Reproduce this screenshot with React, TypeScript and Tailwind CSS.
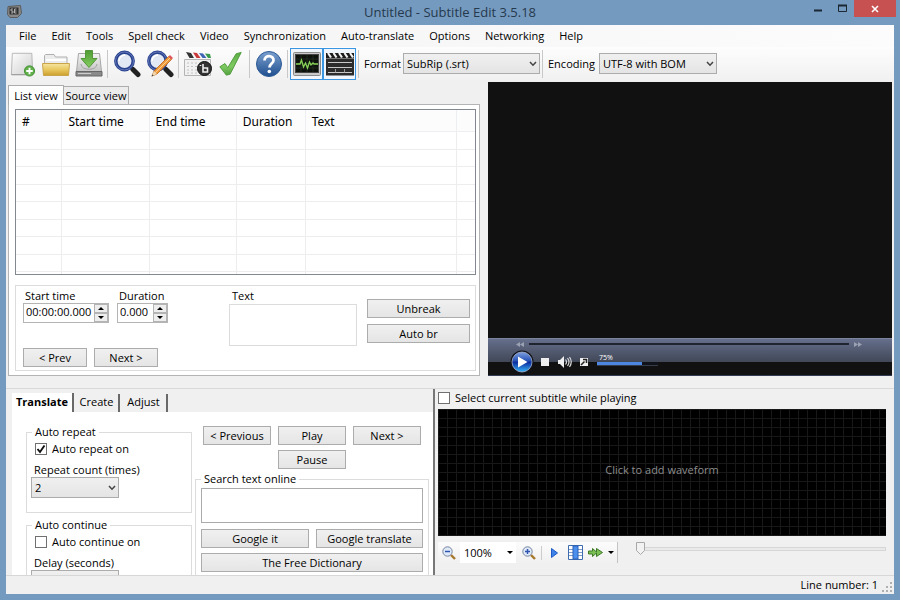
import { useState } from "react";

const menuItems = [
  "File",
  "Edit",
  "Tools",
  "Spell check",
  "Video",
  "Synchronization",
  "Auto-translate",
  "Options",
  "Networking",
  "Help",
];

const NewIcon = () => (
  <svg viewBox="0 0 28 28" className="size-[26px]">
    <defs>
      <linearGradient id="paper" x1="0" y1="0" x2="1" y2="1">
        <stop offset="0" stopColor="#fdfdfd" />
        <stop offset="1" stopColor="#cfcfcf" />
      </linearGradient>
    </defs>
    <path d="M2.500 2.500h21l1 23H1.500z" fill="url(#paper)" stroke="#b4b4b4" />
    <path d="M1.500 25.500h22" stroke="#979797" />
    <circle cx="21" cy="21.500" r="5.500" fill="#62b04a" stroke="#3f8f34" />
    <path d="M21 18v7M17.500 21.500h7" stroke="#fff" strokeWidth="2" />
  </svg>
);

const OpenIcon = () => (
  <svg viewBox="0 0 28 28" className="size-7">
    <defs>
      <linearGradient id="folder" x1="0" y1="0" x2="0" y2="1">
        <stop offset="0" stopColor="#f6e4a0" />
        <stop offset="0.500" stopColor="#e8c860" />
        <stop offset="1" stopColor="#cb9f2c" />
      </linearGradient>
    </defs>
    <path d="M2.500 14V5.500l1-1H12l1.500 2.500H25V14z" fill="#ececec" stroke="#b0b0b0" />
    <path d="M4 10h20" stroke="#fff" strokeWidth="2" />
    <path d="M.500 13.500h27l-1 12h-25z" fill="url(#folder)" stroke="#c9a44a" />
  </svg>
);

const SaveIcon = () => (
  <svg viewBox="0 0 28 28" className="size-7">
    <defs>
      <linearGradient id="disk" x1="0" y1="0" x2="0" y2="1">
        <stop offset="0" stopColor="#f4f4f4" />
        <stop offset="1" stopColor="#c4c4c4" />
      </linearGradient>
      <linearGradient id="arrow" x1="0" y1="0" x2="0" y2="1">
        <stop offset="0" stopColor="#4f9a35" />
        <stop offset="1" stopColor="#84cf5d" />
      </linearGradient>
    </defs>
    <path d="M3.500 3.500h21l2 18H1.500z" fill="url(#disk)" stroke="#a6a6a6" />
    <path d="M1 21.500h26V26H1z" fill="#8a8a8a" stroke="#666" />
    <path d="M3 23.500h13" stroke="#ccc" />
    <path d="M6 14c0 7 16 7 16 0" fill="none" stroke="#a2a2a2" />
    <path d="M10.500.500h7v8H22l-8 9-8-9h4.500z" fill="url(#arrow)" stroke="#54963c" />
  </svg>
);

const Lens = () => (
  <>
    <path d="M17 17l3 3" stroke="#777" strokeWidth="3" />
    <path d="M20 19.500l5 5" stroke="#222" strokeWidth="5" strokeLinecap="round" />
    <circle cx="11.500" cy="11" r="8.700" fill="#e2e9f4" stroke="#29428f" strokeWidth="3.400" />
    <circle cx="11.500" cy="11" r="9" fill="none" stroke="#6579b8" strokeWidth="1" />
    <path d="M6 11a6 6 0 0 1 6-6" fill="none" stroke="#fff" strokeWidth="1.500" />
  </>
);

const FindIcon = () => (
  <svg viewBox="0 0 28 28" className="size-7">
    <Lens />
  </svg>
);

const ReplaceIcon = () => (
  <svg viewBox="0 0 28 28" className="size-7">
    <Lens />
    <path d="M8 21L22.500 6.500l3 3L11 24l-5 2z" fill="#f09a3e" stroke="#b96519" strokeWidth=".8" />
    <path d="M9.500 22.500L24 8" stroke="#ffd08e" />
    <path d="M22.500 6.500L24 5l3 3-1.500 1.500z" fill="#e0575c" />
    <path d="M8 21l-2.500 5.500L11 24z" fill="#f0d6ae" />
    <path d="M6.500 24.500l-1 2 2-1z" fill="#333" />
  </svg>
);

const VisualSyncIcon = () => (
  <svg viewBox="0 0 28 28" className="size-7">
    <path d="M.500 9.500h26v16H.500z" fill="#f1f1f1" stroke="#b4b4b4" />
    <path d="M.500 2l26 1.500v5H.500z" fill="#f7f7f7" />
    <path d="M2 2l5 1 3 5H5.500z" fill="#333" />
    <path d="M9 2.500l4 .5L16.500 8h-4z" fill="#c93a3a" />
    <path d="M15 3l4 .5L22.500 8h-4z" fill="#3b64b5" />
    <path d="M21 3.500l5 .5 1 4h-3z" fill="#3b9a4c" />
    <path d="M3 13h21M3 16.500h21M3 20h21M3 23h21" stroke="#c2c2c2" strokeDasharray="2 2" />
    <circle cx="20.500" cy="18.500" r="7" fill="#333" stroke="#111" />
    <path d="M19 14v4h4.500v4H19v-4M16.500 16v-1" fill="none" stroke="#eee" strokeWidth="1.600" />
  </svg>
);

const CheckIcon = () => (
  <svg viewBox="0 0 28 28" className="size-[26px]">
    <defs>
      <linearGradient id="check" x1="0" y1="0" x2="0" y2="1">
        <stop offset="0" stopColor="#5cab45" />
        <stop offset="0.600" stopColor="#7fcb62" />
        <stop offset="1" stopColor="#55a040" />
      </linearGradient>
    </defs>
    <path d="M2 17l5.500-3.500 3 4.500L19.500 3l5.500-1.500L13 25l-4 1z" fill="url(#check)" stroke="#4f9b3d" />
  </svg>
);

const HelpIcon = () => (
  <svg viewBox="0 0 28 28" className="size-7">
    <defs>
      <linearGradient id="help" x1="0" y1="0" x2="0" y2="1">
        <stop offset="0" stopColor="#7ba0cf" />
        <stop offset="1" stopColor="#1f4f8f" />
      </linearGradient>
    </defs>
    <circle cx="14" cy="14" r="12.500" fill="url(#help)" stroke="#2d5b96" />
    <path
      d="M9.500 10.500c.2-6 9.500-5.500 9 0-.2 3-4 3.300-4 7"
      fill="none"
      stroke="#fff"
      strokeWidth="2.800"
    />
    <circle cx="14.300" cy="21.500" r="1.800" fill="#fff" />
  </svg>
);

const WaveIcon = () => (
  <svg viewBox="0 0 28 28" className="size-7">
    <rect x=".5" y="2.500" width="27" height="23" rx="1" fill="#c9c9c9" stroke="#8a8a8a" />
    <rect x="2.500" y="4.500" width="23" height="18" fill="#0d120d" stroke="#444" />
    <path d="M3 9h22M3 13.500h22M3 18h22M8 5v17M14 5v17M20 5v17" stroke="#263526" strokeWidth=".7" />
    <path
      d="M3 14h4l1.500-4 2 7 2-4 2 5 2-6 1.500 3 2-2 1 1H25"
      fill="none"
      stroke="#87d257"
      strokeWidth="1.300"
    />
  </svg>
);

const ClapperIcon = () => (
  <svg viewBox="0 0 28 28" className="size-7">
    <path d="M0 3h28v5H0z" fill="#1b1b1b" />
    <path
      d="M2 3l3 4.500M7.500 3l3 4.500M13 3l3 4.500M18.500 3l3 4.500M24 3l3 4.500"
      stroke="#f3f3f3"
      strokeWidth="2.200"
    />
    <path d="M0 9h28v16.500H0z" fill="#2c2c2c" />
    <path d="M0 8.500h28" stroke="#777" />
    <path d="M2 12.500h24M2 17.500h24M2 22.500h24" stroke="#c8c8c8" strokeWidth="1.200" />
    <path d="M9.500 19v3.500M18.500 19v3.500" stroke="#999" />
  </svg>
);

const ToolButton = ({ label, active, children }: any) => (
  <button
    aria-label={label}
    className={
      "flex h-8 w-[33px] items-center justify-center border " +
      (active ? "border-[#3a96e0] bg-[#f0f6fc]" : "border-transparent")
    }
  >
    {children}
  </button>
);

const Separator = () => <div className="mx-[2px] h-7 w-px bg-[#c8c8c8]" />;

const Select = ({ id, label, value, className }: any) => (
  <div className={"relative " + className}>
    <select
      id={id}
      aria-label={label}
      className="block h-[21px] w-full appearance-none border border-[#acacac] bg-linear-to-b from-[#f0f0f0] to-[#e4e4e4] pl-[3px] pr-5"
    >
      <option>{value}</option>
    </select>
    <svg viewBox="0 0 8 6" className="pointer-events-none absolute right-[3px] top-2 h-[6px] w-2">
      <path d="M1 1l3 3.200L7 1" fill="none" stroke="#444" strokeWidth="1.500" />
    </svg>
  </div>
);

const Button = ({ className = "", children }: any) => (
  <button
    className={
      "h-[19px] border border-[#acacac] bg-linear-to-b from-[#f0f0f0] to-[#e5e5e5] text-center leading-4 " +
      className
    }
  >
    {children}
  </button>
);

const Spinner = ({ id, label, value, className }: any) => (
  <div>
    <label htmlFor={id} className="block pl-[2px] leading-[14px]">
      {label}
    </label>
    <div className={"flex h-5 border border-[#b4b4b4] bg-white " + className}>
      <input id={id} defaultValue={value} className="h-4 w-full min-w-0 pl-[2px]" />
      <div className="flex w-[14px] shrink-0 flex-col">
        <button aria-label={label + " up"} className="flex h-[9px] items-center justify-center border border-[#b4b4b4] bg-[#eee]">
          <svg viewBox="0 0 6 3" className="h-[3px] w-[6px]">
            <path d="M0 3l3-3 3 3z" />
          </svg>
        </button>
        <button aria-label={label + " down"} className="flex h-[9px] items-center justify-center border border-[#b4b4b4] bg-[#eee]">
          <svg viewBox="0 0 6 3" className="h-[3px] w-[6px]">
            <path d="M0 0l3 3 3-3z" />
          </svg>
        </button>
      </div>
    </div>
  </div>
);

const Checkbox = ({ label, checked }: any) => (
  <label className="flex h-[14px] shrink-0 items-center gap-[5px]">
    <span className="relative size-3">
      <input
        type="checkbox"
        defaultChecked={checked}
        className="peer block size-3 appearance-none border border-[#707070] bg-white"
      />
      <svg
        viewBox="0 0 12 12"
        className="pointer-events-none absolute inset-0 hidden size-3 peer-checked:block"
      >
        <path d="M2.500 6l2.500 3 4.500-6.500" fill="none" stroke="#111" strokeWidth="1.900" />
      </svg>
    </span>
    {label}
  </label>
);

const TitleBar = () => (
  <header className="flex h-[25px] shrink-0 items-start">
    <div className="w-[120px] pl-[7px] pt-[5px]">
      <svg viewBox="0 0 15 13" className="h-[13px] w-[15px]">
        <path d="M1 1.500l12.500-1 1 8-4 4H3l-2.500-3z" fill="#888" stroke="#5b5b5b" />
        <rect x="2.500" y="2.500" width="9" height="7" fill="#2e2e2e" />
        <path d="M6 4H4v2h2v2H4M9.500 4h-2v4h2M7.500 6h2" fill="none" stroke="#ccc" strokeWidth=".8" />
      </svg>
    </div>
    <h1 className="flex-1 text-center text-[13px] leading-6 text-[#25394d]">
      Untitled - Subtitle Edit 3.5.18
    </h1>
    <div className="flex w-[120px] justify-end pr-1">
      <button aria-label="Minimize" className="flex h-[17px] w-6 items-center justify-center">
        <svg viewBox="0 0 9 9" className="size-[9px]">
          <path d="M0 6.500h8" stroke="#1b2733" strokeWidth="2" />
        </svg>
      </button>
      <button aria-label="Maximize" className="flex h-[17px] w-6 items-center justify-center">
        <svg viewBox="0 0 9 9" className="size-[9px]">
          <path d="M.5 1.500h8v6h-8z" fill="none" stroke="#1b2733" />
          <path d="M0 1.500h9" stroke="#1b2733" strokeWidth="2" />
        </svg>
      </button>
      <button aria-label="Close" className="flex h-[17px] w-[42px] items-center justify-center bg-[#c75050]">
        <svg viewBox="0 0 8 8" className="size-2">
          <path d="M1 1l6 6M7 1L1 7" stroke="#fff" strokeWidth="1.600" />
        </svg>
      </button>
    </div>
  </header>
);

const Toolbar = () => (
  <div className="flex h-[35px] shrink-0 items-center bg-linear-to-b from-[#fdfdfd] to-[#f0f0f0] pb-[2px]">
    <ToolButton label="New"><NewIcon /></ToolButton>
    <ToolButton label="Open"><OpenIcon /></ToolButton>
    <ToolButton label="Save"><SaveIcon /></ToolButton>
    <Separator />
    <ToolButton label="Find"><FindIcon /></ToolButton>
    <ToolButton label="Replace"><ReplaceIcon /></ToolButton>
    <Separator />
    <ToolButton label="Visual sync"><VisualSyncIcon /></ToolButton>
    <ToolButton label="Spell check"><CheckIcon /></ToolButton>
    <Separator />
    <ToolButton label="Help"><HelpIcon /></ToolButton>
    <Separator />
    <ToolButton label="Waveform" active><WaveIcon /></ToolButton>
    <ToolButton label="Video" active><ClapperIcon /></ToolButton>
    <Separator />
    <label htmlFor="format" className="w-[42px] pl-[3px]">Format</label>
    <Select id="format" value="SubRip (.srt)" className="w-[137px]" />
    <Separator />
    <label htmlFor="encoding" className="w-[54px] pl-[3px]">Encoding</label>
    <Select id="encoding" value="UTF-8 with BOM" className="w-[118px]" />
  </div>
);

const ListView = () => (
  <div className="flex min-h-0 flex-col">
    <div role="tablist" className="flex h-[22px] items-end pt-[2px]">
      <button role="tab" aria-selected="true" className="relative -mb-px h-5 w-14 border border-b-0 border-[#acacac] bg-white leading-4">
        List view
      </button>
      <button role="tab" className="h-[18px] w-[65px] border border-b-0 border-l-0 border-[#acacac] bg-[#ececec] leading-4">
        Source view
      </button>
    </div>
    <div className="flex min-h-0 flex-1 flex-col gap-[10px] border border-[#b4b4b4] bg-white pb-1 pl-[6px] pr-[3px] pt-1">
      <div className="min-h-0 flex-1 overflow-hidden border border-[#828790]">
        <table className="w-full table-fixed border-collapse text-left font-['Noto_Sans',sans-serif] text-[12px] leading-4">
          <colgroup>
            <col className="w-[10%]" />
            <col className="w-[19%]" />
            <col className="w-[19%]" />
            <col className="w-[15%]" />
            <col />
            <col className="w-[4%]" />
          </colgroup>
          <thead>
            <tr className="h-[21px] bg-[#fcfcfd]">
              {["#", "Start time", "End time", "Duration", "Text", ""].map((name, i) => (
                <th key={i} className="border-b border-r border-[#eceef2] pl-[6px] pt-[3px] font-normal last:border-r-0">
                  {name}
                </th>
              ))}
            </tr>
          </thead>
          <tbody>
            {Array.from({ length: 9 }, (_, row) => (
              <tr key={row} className="odd:h-[18px] even:h-[17px]">
                {Array.from({ length: 6 }, (_, col) => (
                  <td key={col} className="border-b border-r border-[#ededed] last:border-r-0"></td>
                ))}
              </tr>
            ))}
          </tbody>
        </table>
      </div>
      <div className="flex h-[86px] shrink-0 border border-[#dcdcdc] pl-[7px] pr-[5px] pt-[3px]">
        <div className="flex flex-1 flex-col">
          <div className="flex gap-2">
            <Spinner id="start" label="Start time" value="00:00:00.000" className="w-[86px]" />
            <Spinner id="duration" label="Duration" value="0.000" className="w-[51px]" />
          </div>
          <div className="mt-[25px] flex gap-[7px]">
            <Button className="w-16">&lt; Prev</Button>
            <Button className="w-16">Next &gt;</Button>
          </div>
        </div>
        <div className="mr-[10px]">
          <label htmlFor="text" className="block pl-[3px] leading-[14px]">Text</label>
          <textarea id="text" className="mt-[1px] block h-[42px] w-32 resize-none border border-[#dcdcdc]" />
        </div>
        <div className="flex w-[103px] flex-col gap-[6px] pt-[10px]">
          <Button>Unbreak</Button>
          <Button>Auto br</Button>
        </div>
      </div>
    </div>
  </div>
);

const VideoPlayer = () => (
  <div className="flex flex-col bg-[#111]">
    <div className="flex-1"></div>
    <div className="h-[38px] border-b border-t border-b-[#333c52] border-t-[#7d859c] bg-linear-to-b from-[#666f8c] from-0% via-[#414858] via-63% to-[#111] to-63%">
      <div className="flex h-[10px] items-center gap-[5px] pl-7 pr-[30px]">
        <svg viewBox="0 0 8 5" className="h-[5px] w-2">
          <path d="M4 0v5L0 2.500zM8 0v5L4 2.500z" fill="#9aa1b3" />
        </svg>
        <input
          type="range"
          aria-label="Position"
          defaultValue={0}
          className="h-[2px] min-w-0 flex-1 appearance-none bg-[#20242f] [&::-webkit-slider-thumb]:appearance-none"
        />
        <svg viewBox="0 0 8 5" className="h-[5px] w-2">
          <path d="M0 0v5l4-2.500zM4 0v5l4-2.500z" fill="#9aa1b3" />
        </svg>
      </div>
      <div className="flex h-[26px] items-center pl-[22px]">
        <button aria-label="Play">
          <svg viewBox="0 0 24 24" className="size-6">
            <defs>
              <linearGradient id="play" x1="0" y1="0" x2="0" y2="1">
                <stop offset="0" stopColor="#7fa0e0" />
                <stop offset="0.450" stopColor="#2450b4" />
                <stop offset="0.500" stopColor="#0a2a9c" />
                <stop offset="1" stopColor="#37b4fa" />
              </linearGradient>
            </defs>
            <circle cx="12" cy="12" r="11.500" fill="#10131c" />
            <circle cx="12" cy="12" r="10" fill="url(#play)" stroke="#a4b0cc" strokeWidth=".8" />
            <path d="M8 6.500v11l9.500-5.500z" fill="#fff" />
          </svg>
        </button>
        <button aria-label="Stop" className="ml-[7px] size-2 bg-[#eee]"></button>
        <button aria-label="Mute" className="ml-[9px]">
          <svg viewBox="0 0 14 12" className="h-3 w-[14px]">
            <path d="M0 4h2l4-4v12L2 8H0z" fill="#eee" />
            <path d="M7.500 3.500q2 2.500 0 5M9.500 2q3 4 0 8M11.500 1q3.500 5 0 10" fill="none" stroke="#ddd" strokeWidth="1.200" />
          </svg>
        </button>
        <button aria-label="Full screen" className="ml-2">
          <svg viewBox="0 0 8 8" className="size-2">
            <path d="M0 0h8v8H0z" fill="#eee" />
            <path d="M1 7l3.500-3.500M3 1.500h3.500V5" fill="none" stroke="#222" strokeWidth="1.500" />
          </svg>
        </button>
        <label className="ml-[9px] block pb-1">
          <span className="block pl-[2px] text-[7px] leading-[8px] text-white">75%</span>
          <input
            type="range"
            defaultValue={75}
            className="block h-1 w-[61px] appearance-none border-b border-[#353c4c] bg-linear-to-r from-[#4c86e0] from-73% to-[#10131a] to-73% [&::-webkit-slider-thumb]:appearance-none"
          />
        </label>
      </div>
    </div>
  </div>
);

const TranslatePanel = () => (
  <div className="flex min-h-0 flex-col border-r-2 border-[#777] pl-[6px] pt-1">
    <div role="tablist" className="flex h-[19px] shrink-0 gap-px">
      <button role="tab" aria-selected="true" className="w-[62px] border-r-2 border-[#696969] bg-white pb-px font-bold">
        Translate
      </button>
      <button role="tab" className="mt-px w-[45px] border-r-2 border-[#696969] pb-[2px]">
        Create
      </button>
      <button role="tab" className="mt-px w-[47px] border-r-2 border-[#696969] pb-[2px]">
        Adjust
      </button>
    </div>
    <div className="flex flex-1 bg-white pl-[14px] pr-1">
      <div className="w-[166px] shrink-0 pt-[13px]">
        <fieldset className="border border-[#dcdcdc] pb-[14px] pl-1">
          <legend className="ml-[1px] px-[3px] leading-[14px]">Auto repeat</legend>
          <div className="mt-[3px] pl-1">
            <Checkbox label="Auto repeat on" checked />
          </div>
          <label htmlFor="repeat" className="mt-[7px] block pl-[3px] leading-[14px]">
            Repeat count (times)
          </label>
          <Select id="repeat" value="2" className="w-[88px]" />
        </fieldset>
        <fieldset className="mt-[5px] border border-[#dcdcdc] pb-[14px] pl-1">
          <legend className="ml-[1px] px-[3px] leading-[14px]">Auto continue</legend>
          <div className="mt-[3px] pl-1">
            <Checkbox label="Auto continue on" />
          </div>
          <label htmlFor="delay" className="mt-[7px] block pl-[3px] leading-[14px]">
            Delay (seconds)
          </label>
          <Select id="delay" value="2" className="w-[88px]" />
        </fieldset>
      </div>
      <div className="ml-[3px] flex-1 pt-[14px]">
        <div className="ml-2 grid grid-cols-[68px_68px_68px] gap-x-[7px] gap-y-[5px]">
          <Button>&lt; Previous</Button>
          <Button>Play</Button>
          <Button>Next &gt;</Button>
          <Button className="col-start-2">Pause</Button>
        </div>
        <fieldset className="mt-[3px] min-w-0 border border-[#dcdcdc] px-[5px] pb-2">
          <legend className="px-[3px] leading-[14px]">Search text online</legend>
          <textarea
            aria-label="Search text online"
            className="mt-[2px] block h-[35px] w-full resize-none border border-[#ababab]"
          />
          <div className="mt-[6px] flex flex-wrap gap-x-[7px] gap-y-[5px]">
            <Button className="w-[108px]">Google it</Button>
            <Button className="flex-1">Google translate</Button>
            <Button className="w-full">The Free Dictionary</Button>
          </div>
        </fieldset>
      </div>
    </div>
  </div>
);

const ZoomLens = ({ plus }: any) => (
  <svg viewBox="0 0 14 14" className="size-[14px]">
    <path d="M9 9l4 4" stroke="#a5782b" strokeWidth="2.400" />
    <circle cx="5.500" cy="5.500" r="4.700" fill="#dfe9f8" stroke="#76859e" />
    <path d="M3 5.500h5" stroke="#2c55b0" strokeWidth="1.500" />
    {plus && <path d="M5.500 3v5" stroke="#2c55b0" strokeWidth="1.500" />}
  </svg>
);

const DownArrow = () => (
  <svg viewBox="0 0 6 3" className="block h-[3px] w-[6px]">
    <path d="M0 0h6L3 3z" />
  </svg>
);

const Waveform = () => {
  const [speed, setSpeed] = useState(0);

  return (
    <div className="flex min-h-0 flex-col pl-[3px] pr-2 pt-[2px]">
      <Checkbox label="Select current subtitle while playing" />
      <button className="mt-1 flex min-h-0 flex-1 items-center justify-center bg-black bg-[linear-gradient(to_right,#181818_1px,transparent_1px),linear-gradient(to_bottom,#181818_1px,transparent_1px)] bg-[size:9px_9px] pb-[6px] text-[#8c8c8c]">
        Click to add waveform
      </button>
      <div className="mb-3 mt-[6px] flex h-[21px] shrink-0 items-center">
        <div className="flex h-[21px] w-[180px] items-center border-r border-[#c4c4c4] bg-linear-to-b from-[#fcfcfc] to-[#f0f0f0] pl-1">
          <button aria-label="Zoom out"><ZoomLens /></button>
          <div className="relative ml-1 flex items-center">
            <select aria-label="Zoom" className="h-[21px] w-14 appearance-none bg-white pl-1">
              <option>100%</option>
            </select>
            <span className="pointer-events-none absolute right-[3px] top-[9px]">
              <DownArrow />
            </span>
          </div>
          <button aria-label="Zoom in" className="ml-[6px]"><ZoomLens plus /></button>
          <div className="ml-[5px] h-[14px] w-px bg-[#ccc]" />
          <button aria-label="Play" className="ml-[9px]">
            <svg viewBox="0 0 7 10" className="h-[10px] w-[7px]">
              <path d="M.500.500v9l6-4.500z" fill="#3f83e8" stroke="#1f5bc4" />
            </svg>
          </button>
          <button aria-label="Center" className="ml-[10px]">
            <svg viewBox="0 0 15 15" className="size-[15px]">
              <path d="M.500.500h14v14H.500z" fill="#fff" stroke="#3d6cb0" />
              <path d="M1 4.500h13M1 7.500h13M1 10.500h13" stroke="#7c9ccb" />
              <path d="M5 1h5v13H5z" fill="#4b90ee" stroke="#2a5fb2" />
            </svg>
          </button>
          <button aria-label="Play rate" className="ml-[5px] flex items-center gap-[5px]">
            <svg viewBox="0 0 15 11" className="h-[11px] w-[15px]">
              <path
                d="M.5 4h4V1.500L8.500 5V1.500l6 4-6 4V6l-4 3.500V7h-4z"
                fill="#7cbf54"
                stroke="#3c7a25"
              />
            </svg>
            <DownArrow />
          </button>
        </div>
        <div className="relative ml-[18px] h-[21px] flex-1">
          <input
            type="range"
            aria-label="Speed"
            value={speed}
            onChange={(e) => setSpeed(Number(e.target.value))}
            className="mt-[5px] block h-1 w-full appearance-none border border-[#d6d6d6] bg-[#e9e9e9] [&::-webkit-slider-thumb]:appearance-none"
          />
          <svg
            viewBox="0 0 9 13"
            className="pointer-events-none absolute top-0 h-[13px] w-[9px]"
            style={{ left: speed + "%" }}
          >
            <path d="M.5.500h8v8l-4 4-4-4z" fill="#f2f2f2" stroke="#a8a8a8" />
          </svg>
        </div>
      </div>
    </div>
  );
};

const App = () => {
  return (
    <div className="flex h-screen flex-col bg-[#759abf] font-['Open_Sans',sans-serif] text-[11px] leading-4 text-black">
      <TitleBar />
      <main className="mx-[6px] mb-[6px] flex min-h-0 flex-1 flex-col bg-[#f0f0f0]">
        <nav className="flex h-[22px] shrink-0 items-center gap-[15px] bg-linear-to-r from-[#f3f3f3] to-[#fcfcfc] pl-[13px]">
          {menuItems.map((item) => (
            <button key={item}>{item}</button>
          ))}
        </nav>
        <Toolbar />
        <div className="grid min-h-0 flex-1 grid-cols-[472fr_404fr] grid-rows-1 gap-2 px-[2px] pb-3">
          <ListView />
          <VideoPlayer />
        </div>
        <div className="grid h-[187px] shrink-0 grid-cols-[429fr_459fr] grid-rows-1 overflow-hidden border-t border-[#d9d9d9]">
          <TranslatePanel />
          <Waveform />
        </div>
        <footer className="flex h-[19px] shrink-0 items-center justify-end gap-1 border-t border-[#d7d7d7] pr-[2px]">
          <span>Line number: 1</span>
          <svg viewBox="0 0 10 10" className="mt-1 size-[10px]">
            <path
              d="M8 0h2v2H8zM4 4h2v2H4zM8 4h2v2H8zM0 8h2v2H0zM4 8h2v2H4zM8 8h2v2H8z"
              fill="#b0b0b0"
            />
          </svg>
        </footer>
      </main>
    </div>
  );
};

export default App;
